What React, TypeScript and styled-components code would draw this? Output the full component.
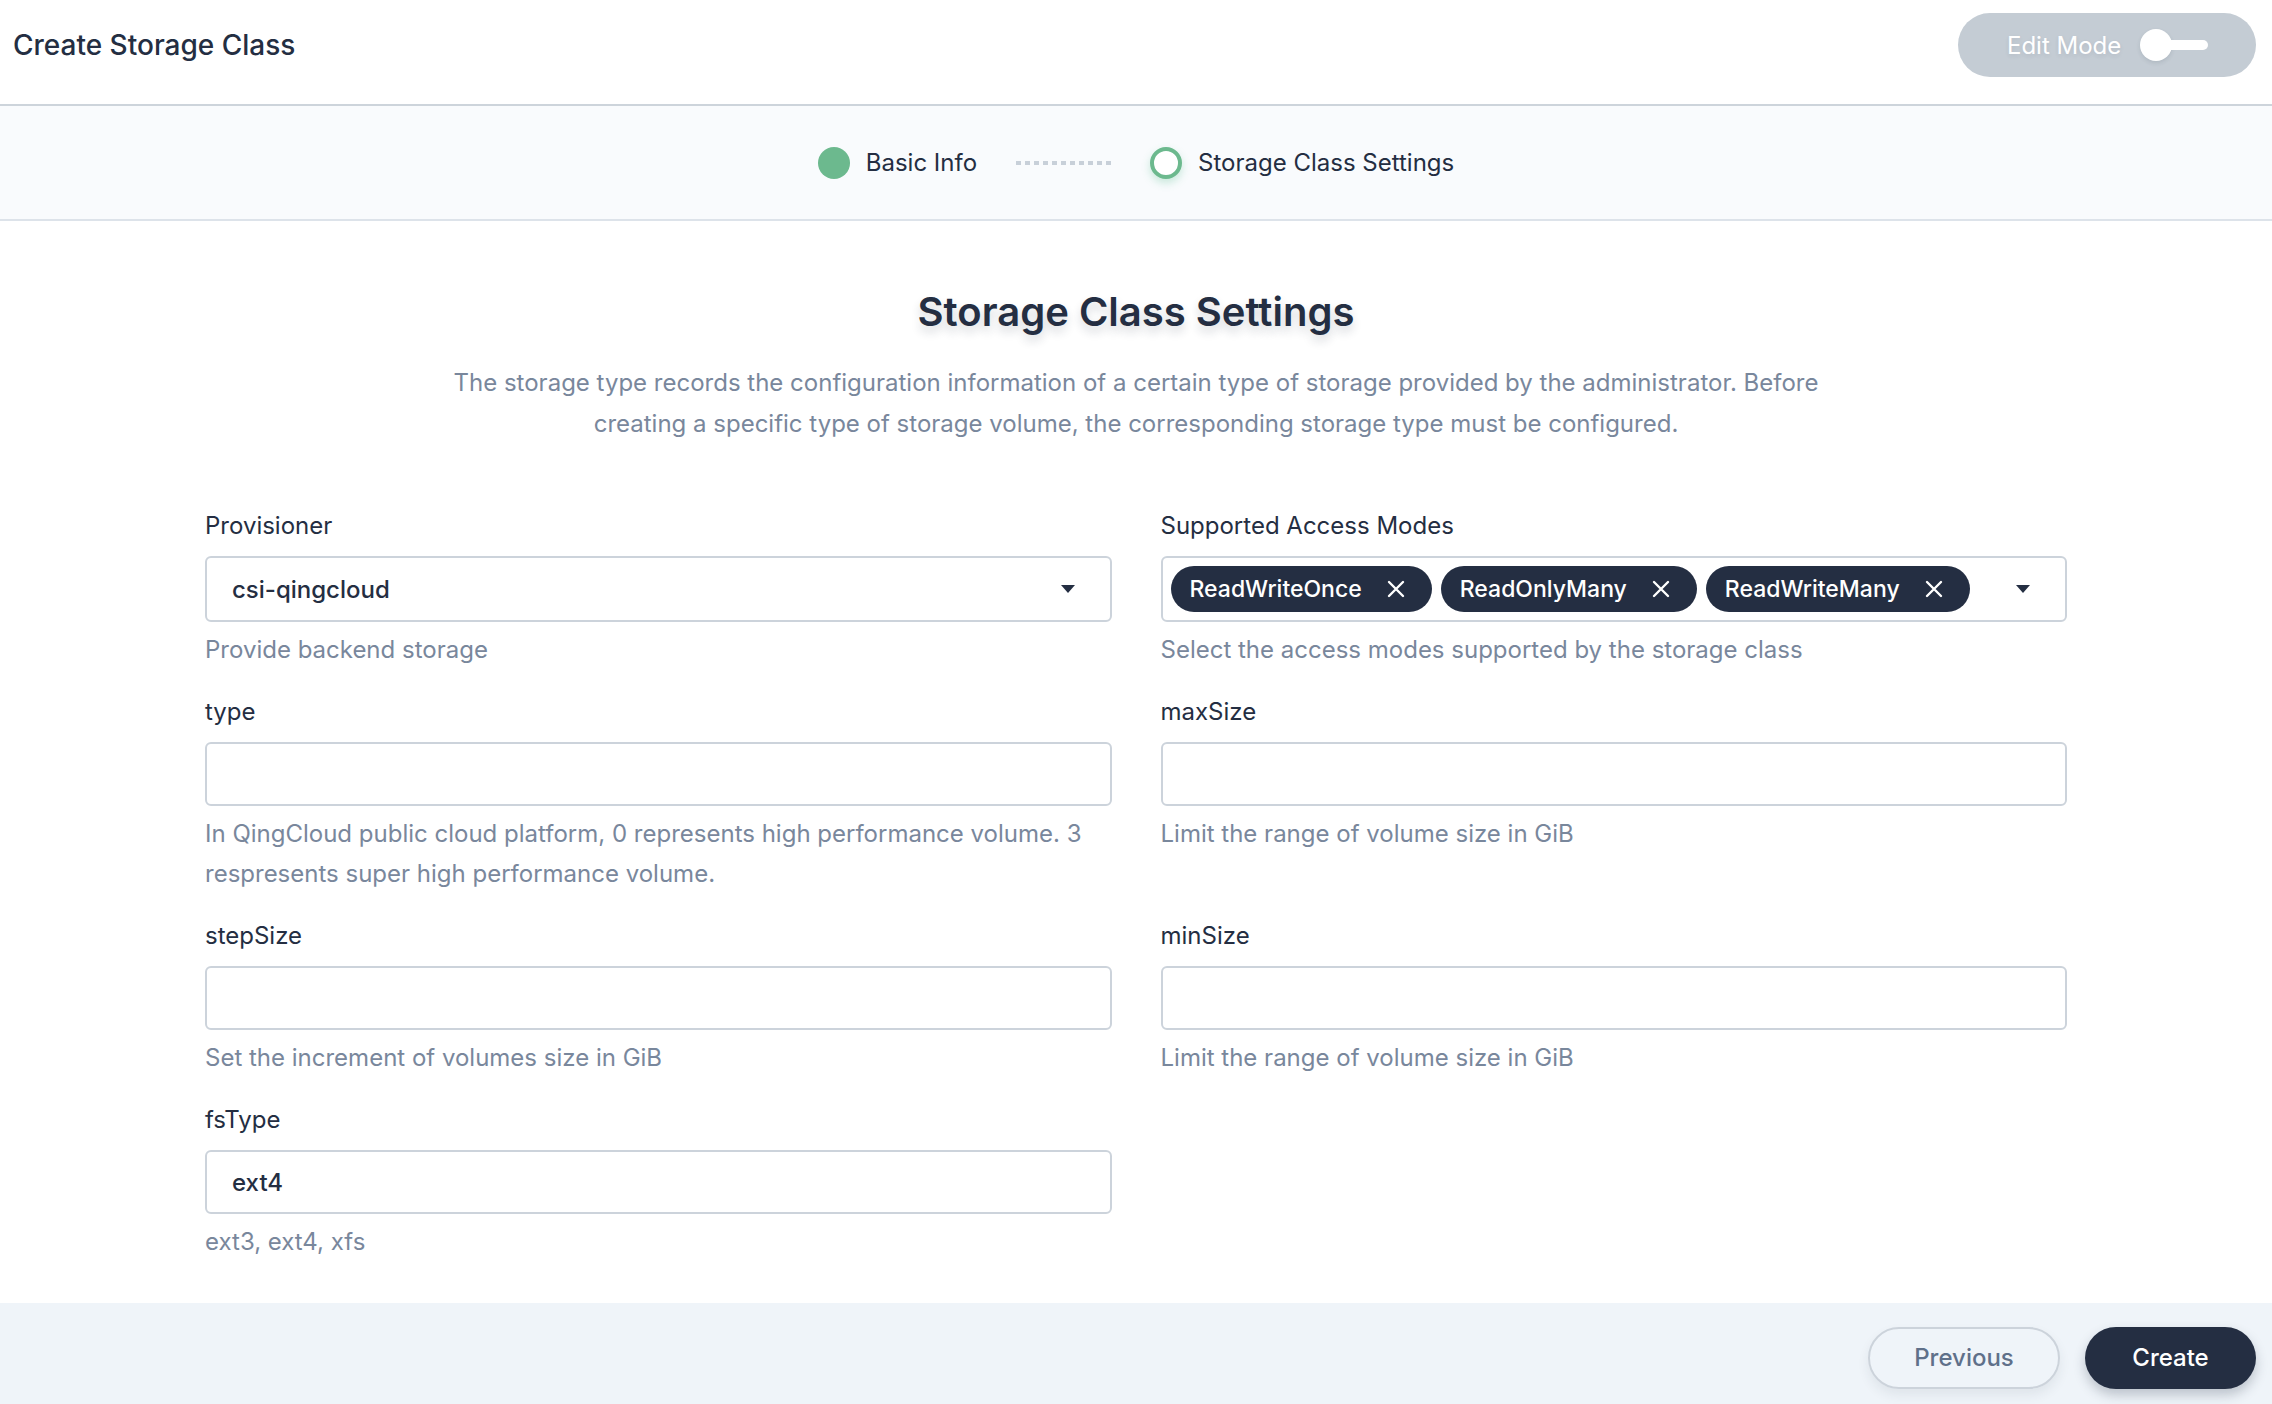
import React from "react";
import styled, { createGlobalStyle } from "styled-components";

const GlobalStyle = createGlobalStyle`
  html, body {
    margin: 0;
    padding: 0;
    background: #ffffff;
  }
  body {
    font-family: Inter, "Liberation Sans", "Noto Sans", sans-serif;
    color: #242e42;
  }
  * {
    box-sizing: border-box;
  }
`;

const accessModes = ["ReadWriteOnce", "ReadOnlyMany", "ReadWriteMany"];

const CaretDown = () => (
  <svg width="16" height="10" viewBox="0 0 16 10">
    <path d="M1 1h14L8 9z" fill="#242e42" />
  </svg>
);

const CloseIcon = () => (
  <svg width="20" height="20" viewBox="0 0 20 20">
    <path
      d="M3 3l14 14M17 3L3 17"
      stroke="#ffffff"
      strokeWidth="2.4"
      strokeLinecap="round"
    />
  </svg>
);

interface FieldProps {
  label: string;
  help: React.ReactNode;
  children: React.ReactNode;
}

const Field: React.FC<FieldProps> = ({ label, help, children }) => {
  return (
    <StyledField>
      <Label>{label}</Label>
      {children}
      <Help>{help}</Help>
    </StyledField>
  );
};

const App = () => {
  return (
    <Page>
      <GlobalStyle />
      <Header>
        <HeaderTitle>Create Storage Class</HeaderTitle>
        <EditMode>
          <span>Edit Mode</span>
          <Toggle>
            <div className="knob" />
            <div className="track" />
          </Toggle>
        </EditMode>
      </Header>

      <Steps>
        <Step>
          <StepDot done={true} />
          <span>Basic Info</span>
        </Step>
        <StepLine />
        <Step>
          <StepDot done={false} />
          <span>Storage Class Settings</span>
        </Step>
      </Steps>

      <Content>
        <Title>Storage Class Settings</Title>
        <Description>
          The storage type records the configuration information of a certain
          type of storage provided by the administrator. Before creating a
          specific type of storage volume, the corresponding storage type must
          be configured.
        </Description>

        <FormGrid>
          <Field label="Provisioner" help="Provide backend storage">
            <SelectBox>
              <span className="value">csi-qingcloud</span>
              <CaretDown />
            </SelectBox>
          </Field>
          <Field
            label="Supported Access Modes"
            help="Select the access modes supported by the storage class"
          >
            <SelectBox tags>
              <TagList>
                {accessModes.map((mode) => (
                  <Tag key={mode}>
                    <span>{mode}</span>
                    <CloseIcon />
                  </Tag>
                ))}
              </TagList>
              <CaretDown />
            </SelectBox>
          </Field>

          <Field
            label="type"
            help="In QingCloud public cloud platform, 0 represents high performance volume. 3 respresents super high performance volume."
          >
            <Input />
          </Field>
          <Field label="maxSize" help="Limit the range of volume size in GiB">
            <Input />
          </Field>

          <Field
            label="stepSize"
            help="Set the increment of volumes size in GiB"
          >
            <Input />
          </Field>
          <Field label="minSize" help="Limit the range of volume size in GiB">
            <Input />
          </Field>

          <Field label="fsType" help="ext3, ext4, xfs">
            <Input defaultValue="ext4" />
          </Field>
        </FormGrid>
      </Content>

      <Footer>
        <Button>Previous</Button>
        <Button primary>Create</Button>
      </Footer>
    </Page>
  );
};

const Page = styled.div`
  display: flex;
  flex-direction: column;
  min-height: 100vh;
`;

const Header = styled.header`
  height: 106px;
  display: flex;
  justify-content: space-between;
  align-items: center;
  padding: 0 16px 0 13px;
  border-bottom: 2px solid #cdd4db;
  background: #ffffff;
`;

const HeaderTitle = styled.div`
  font-size: 28px;
  font-weight: 500;
  color: #242e42;
  margin-top: -14px;
`;

const EditMode = styled.div`
  display: flex;
  align-items: center;
  gap: 19px;
  width: 298px;
  height: 64px;
  padding-left: 49px;
  border-radius: 32px;
  background: #c4ccd4;
  color: #ffffff;
  font-size: 24px;
  margin-top: -14px;
  text-shadow: 0 2px 4px rgba(36, 46, 66, 0.1);
`;

const Toggle = styled.div`
  display: flex;
  align-items: center;
  > .knob {
    width: 32px;
    height: 32px;
    border-radius: 50%;
    background: #ffffff;
    box-shadow: 0 2px 4px rgba(36, 46, 66, 0.12);
  }
  > .track {
    width: 38px;
    height: 10px;
    margin-left: -2px;
    border-radius: 0 5px 5px 0;
    background: #ffffff;
  }
`;

const Steps = styled.div`
  height: 115px;
  display: flex;
  justify-content: center;
  align-items: center;
  background: #f9fbfd;
  border-bottom: 2px solid #dde3ea;
`;

const Step = styled.div`
  display: flex;
  align-items: center;
  gap: 16px;
  font-size: 24px;
  color: #242e42;
`;

const StepDot = styled.div<{ done: boolean }>`
  width: 32px;
  height: 32px;
  border-radius: 50%;
  background: ${(props) => (props.done ? "#6cb98e" : "#ffffff")};
  border: ${(props) => (props.done ? "none" : "4px solid #6cb98e")};
  box-shadow: ${(props) =>
    props.done ? "none" : "0 4px 8px rgba(85, 188, 138, 0.3)"};
`;

const StepLine = styled.div`
  width: 97px;
  height: 4px;
  margin: 0 37px 0 39px;
  background-image: linear-gradient(
    to right,
    #c8d0d9 0,
    #c8d0d9 5px,
    transparent 5px,
    transparent 9px
  );
  background-size: 9px 4px;
`;

const Content = styled.main`
  flex: 1;
  display: flex;
  flex-direction: column;
  align-items: center;
  padding: 63px 0 40px;
`;

const Title = styled.h2`
  margin: 0;
  font-size: 40px;
  line-height: 56px;
  font-weight: 600;
  color: #242e42;
  text-shadow: 0 6px 10px rgba(36, 46, 66, 0.18);
`;

const Description = styled.p`
  margin: 22px 0 0;
  max-width: 1390px;
  text-align: center;
  font-size: 24px;
  line-height: 41px;
  color: #79879c;
`;

const FormGrid = styled.div`
  width: 1862px;
  margin-top: 62px;
  display: grid;
  grid-template-columns: 1fr 1fr;
  column-gap: 49px;
  row-gap: 22px;
`;

const StyledField = styled.div`
  display: flex;
  flex-direction: column;
`;

const Label = styled.label`
  font-size: 24px;
  line-height: 40px;
  color: #242e42;
  margin-bottom: 10px;
`;

const Help = styled.div`
  margin-top: 8px;
  font-size: 24px;
  line-height: 40px;
  color: #79879c;
`;

const SelectBox = styled.div<{ tags?: boolean }>`
  height: 66px;
  display: flex;
  align-items: center;
  justify-content: space-between;
  border: 2px solid #ccd3db;
  border-radius: 6px;
  background: #ffffff;
  padding: ${(props) => (props.tags ? "0 34px 0 8px" : "0 34px 0 25px")};
  > .value {
    font-size: 24px;
    font-weight: 500;
    color: #242e42;
  }
`;

const TagList = styled.div`
  display: flex;
  gap: 9px;
`;

const Tag = styled.div`
  display: flex;
  align-items: center;
  gap: 24px;
  height: 46px;
  padding: 0 26px 0 19px;
  border-radius: 23px;
  background: #242e42;
  color: #ffffff;
  font-size: 23px;
  font-weight: 500;
`;

const Input = styled.input`
  height: 64px;
  width: 100%;
  border: 2px solid #ccd3db;
  border-radius: 6px;
  background: #ffffff;
  padding: 0 25px;
  font-family: inherit;
  font-size: 24px;
  font-weight: 500;
  color: #242e42;
  outline: none;
`;

const Footer = styled.footer`
  height: 101px;
  display: flex;
  justify-content: flex-end;
  align-items: center;
  gap: 25px;
  padding: 8px 16px 0 0;
  background: #eff4f9;
`;

const Button = styled.button<{ primary?: boolean }>`
  height: 62px;
  min-width: ${(props) => (props.primary ? "171px" : "192px")};
  padding: 0 30px;
  border-radius: 31px;
  font-family: inherit;
  font-size: 24px;
  font-weight: 500;
  cursor: pointer;
  border: ${(props) => (props.primary ? "none" : "2px solid #ccd3db")};
  background: ${(props) => (props.primary ? "#242e42" : "transparent")};
  color: ${(props) => (props.primary ? "#ffffff" : "#5f708a")};
  box-shadow: 0 6px 12px
    ${(props) =>
      props.primary ? "rgba(36, 46, 66, 0.25)" : "rgba(36, 46, 66, 0.08)"};
`;

export default App;
